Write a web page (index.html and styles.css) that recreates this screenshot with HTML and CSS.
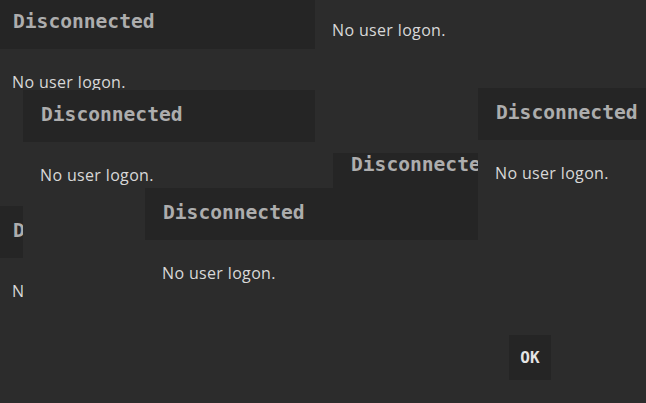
FILE: index.html
```html
<!DOCTYPE html>
<html lang="en">
<head>
<meta charset="utf-8">
<title>Disconnected</title>
<link rel="stylesheet" href="styles.css">
</head>
<body>
<div class="desktop">
  <section class="dialog dlg-a">
    <header class="dialog-head"><h2 class="dialog-title">Disconnected</h2></header>
    <p class="dialog-msg">No user logon.</p>
  </section>
  <section class="dialog dlg-g">
    <header class="dialog-head"><h2 class="dialog-title">Disconnected</h2></header>
    <p class="dialog-msg">No user logon.</p>
  </section>
  <section class="dialog dlg-c">
    <header class="dialog-head"><h2 class="dialog-title">Disconnected</h2></header>
    <p class="dialog-msg">No user logon.</p>
  </section>
  <section class="dialog dlg-e">
    <header class="dialog-head"><h2 class="dialog-title">Disconnected</h2></header>
    <p class="dialog-msg">No user logon.</p>
  </section>
  <section class="dialog dlg-b">
    <header class="dialog-head"><h2 class="dialog-title">Disconnected</h2></header>
    <p class="dialog-msg">No user logon.</p>
  </section>
  <section class="dialog dlg-f">
    <header class="dialog-head"><h2 class="dialog-title">Disconnected</h2></header>
    <p class="dialog-msg">No user logon.</p>
  </section>
  <section class="dialog dlg-d">
    <header class="dialog-head"><h2 class="dialog-title">Disconnected</h2></header>
    <p class="dialog-msg">No user logon.</p>
    <footer class="dialog-foot"><button class="btn-ok" type="button">OK</button></footer>
  </section>
</div>
</body>
</html>
```
FILE: styles.css
```css
* { box-sizing: border-box; }
html, body {
  margin: 0;
  padding: 0;
  width: 646px;
  height: 403px;
  overflow: hidden;
  background: #2c2c2c;
}
.desktop {
  position: relative;
  width: 646px;
  height: 403px;
  overflow: hidden;
}
.dialog {
  position: absolute;
  display: flex;
  flex-direction: column;
  background: #2c2c2c;
  width: 400px;
  height: 400px;
}
.dialog-head {
  height: 52px;
  flex: none;
  background: #252525;
  padding: 15px 18px 0;
}
.dialog-title {
  margin: 0;
  font-family: "DejaVu Sans Mono", monospace;
  font-weight: bold;
  font-size: 19.6px;
  line-height: 20px;
  color: #adadad;
  white-space: nowrap;
}
.dialog-msg {
  margin: 0;
  padding: 23px 17px 0;
  font-family: "Open Sans", sans-serif;
  font-size: 16px;
  line-height: 20px;
  color: #d8d8d8;
  letter-spacing: 0.35px;
  white-space: nowrap;
}
.dialog-foot {
  margin-top: auto;
  padding: 0 0 23px 31px;
}
.btn-ok {
  display: block;
  width: 42px;
  height: 45px;
  border: 0;
  padding: 0;
  background: #252525;
  color: #e4e4e4;
  font-family: "DejaVu Sans Mono", monospace;
  font-weight: bold;
  font-size: 16px;
}

.dlg-a { left: -5px; top: -3px; width: 320px; height: 300px; }
.dlg-g { left: -5px; top: 206px; width: 300px; height: 300px; }
.dlg-c { left: 23px; top: 90px; width: 400px; height: 400px; }
.dlg-e { left: 333px; top: 140px; width: 300px; height: 300px; }
.dlg-b { left: 315px; top: -55px; width: 400px; height: 208px; }
.dlg-f { left: 145px; top: 188px; width: 360px; height: 300px; }
.dlg-d { left: 478px; top: 88px; width: 200px; height: 315px; }
```
